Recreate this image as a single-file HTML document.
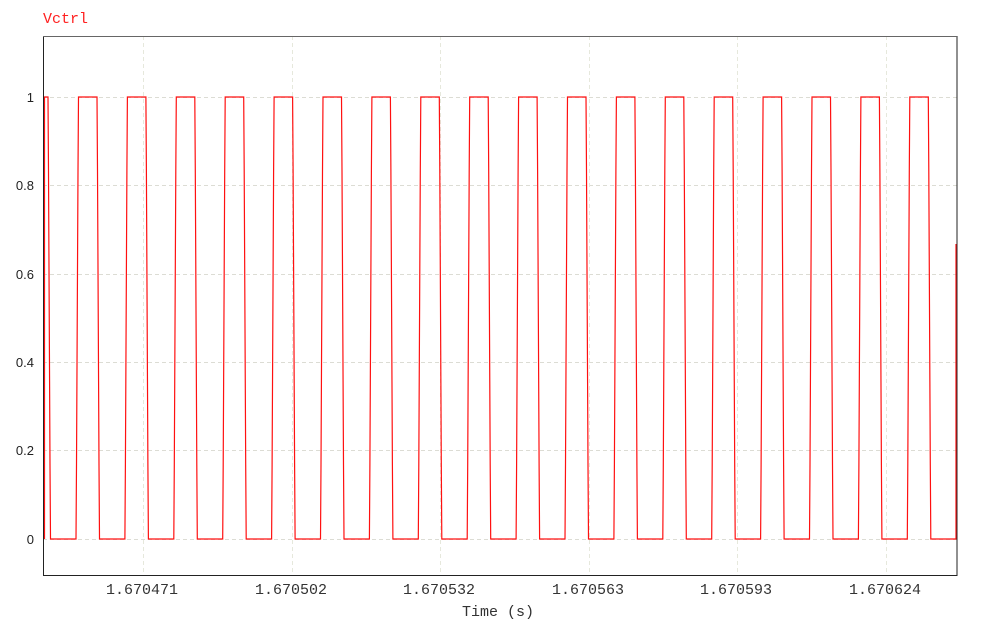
<!DOCTYPE html>
<html><head><style>
html,body{margin:0;padding:0;background:#fff;width:992px;height:634px;overflow:hidden}
</style></head><body>
<svg width="992" height="634" xmlns="http://www.w3.org/2000/svg">
<text x="43" y="23" font-family="Liberation Mono, monospace" font-size="15" fill="#ff2020">Vctrl</text>
<g stroke="#dcdcd4" stroke-width="1" stroke-dasharray="4,3">
<line x1="43" y1="97.5" x2="957" y2="97.5"/>
<line x1="43" y1="185.5" x2="957" y2="185.5"/>
<line x1="43" y1="274.5" x2="957" y2="274.5"/>
<line x1="43" y1="362.5" x2="957" y2="362.5"/>
<line x1="43" y1="450.5" x2="957" y2="450.5"/>
<line x1="43" y1="539.5" x2="957" y2="539.5"/>
</g>
<g stroke="#e6e8dc" stroke-width="1" stroke-dasharray="4,3">
<line x1="143.5" y1="36" x2="143.5" y2="576"/>
<line x1="292.5" y1="36" x2="292.5" y2="576"/>
<line x1="440.5" y1="36" x2="440.5" y2="576"/>
<line x1="589.5" y1="36" x2="589.5" y2="576"/>
<line x1="737.5" y1="36" x2="737.5" y2="576"/>
<line x1="886.5" y1="36" x2="886.5" y2="576"/>
</g>
<clipPath id="c"><rect x="43" y="36" width="914" height="540"/></clipPath>
<path clip-path="url(#c)" fill="none" stroke="#ff1010" stroke-width="1.2" d="M44.5,539 L44.5,97 H48 l0.5,74 l1.5,294 l0.5,74 H76 l0.5,-74 l1.5,-294 l0.5,-74
h18.5 l0.5,74 l1.5,294 l0.5,74 h25.4 l0.5,-74 l1.5,-294 l0.5,-74 h18.5 l0.5,74 l1.5,294 l0.5,74 h25.4 l0.5,-74 l1.5,-294 l0.5,-74 h18.5 l0.5,74 l1.5,294 l0.5,74 h25.4 l0.5,-74 l1.5,-294 l0.5,-74
h18.5 l0.5,74 l1.5,294 l0.5,74 h25.4 l0.5,-74 l1.5,-294 l0.5,-74 h18.5 l0.5,74 l1.5,294 l0.5,74 h25.4 l0.5,-74 l1.5,-294 l0.5,-74 h18.5 l0.5,74 l1.5,294 l0.5,74 h25.4 l0.5,-74 l1.5,-294 l0.5,-74
h18.5 l0.5,74 l1.5,294 l0.5,74 h25.4 l0.5,-74 l1.5,-294 l0.5,-74 h18.5 l0.5,74 l1.5,294 l0.5,74 h25.4 l0.5,-74 l1.5,-294 l0.5,-74 h18.5 l0.5,74 l1.5,294 l0.5,74 h25.4 l0.5,-74 l1.5,-294 l0.5,-74
h18.5 l0.5,74 l1.5,294 l0.5,74 h25.4 l0.5,-74 l1.5,-294 l0.5,-74 h18.5 l0.5,74 l1.5,294 l0.5,74 h25.4 l0.5,-74 l1.5,-294 l0.5,-74 h18.5 l0.5,74 l1.5,294 l0.5,74 h25.4 l0.5,-74 l1.5,-294 l0.5,-74
h18.5 l0.5,74 l1.5,294 l0.5,74 h25.4 l0.5,-74 l1.5,-294 l0.5,-74 h18.5 l0.5,74 l1.5,294 l0.5,74 h25.4 l0.5,-74 l1.5,-294 l0.5,-74 h18.5 l0.5,74 l1.5,294 l0.5,74 h25.4 l0.5,-74 l1.5,-294 l0.5,-74
h18.5 l0.5,74 l1.5,294 l0.5,74 h25.4 l0.5,-74 l1.5,-294 l0.5,-74 h18.5 l0.5,74 l1.5,294 l0.5,74 h25.4 l0.5,-74 l1.5,-294 l0.5,-74 h18.5 l0.5,74 l1.5,294 l0.5,74 h25.4 l0.5,-74 l1.5,-294 l0.5,-74"/>
<line x1="956" y1="539" x2="956" y2="244" stroke="#ff1010" stroke-width="1.2"/>
<rect x="43.5" y="36.5" width="913.5" height="539" fill="none" stroke="#222" stroke-width="1"/>
<line x1="43" y1="36.5" x2="957" y2="36.5" stroke="#666" stroke-width="1"/>
<g font-family="Liberation Sans, sans-serif" font-size="13" fill="#222" text-anchor="end">
<text x="34" y="102">1</text>
<text x="34" y="190">0.8</text>
<text x="34" y="279">0.6</text>
<text x="34" y="367">0.4</text>
<text x="34" y="455">0.2</text>
<text x="34" y="544">0</text>
</g>
<g font-family="Liberation Mono, monospace" font-size="15" fill="#333" text-anchor="middle">
<text x="142" y="594">1.670471</text>
<text x="291" y="594">1.670502</text>
<text x="439" y="594">1.670532</text>
<text x="588" y="594">1.670563</text>
<text x="736" y="594">1.670593</text>
<text x="885" y="594">1.670624</text>
<text x="498" y="616">Time (s)</text>
</g>
</svg>
</body></html>
